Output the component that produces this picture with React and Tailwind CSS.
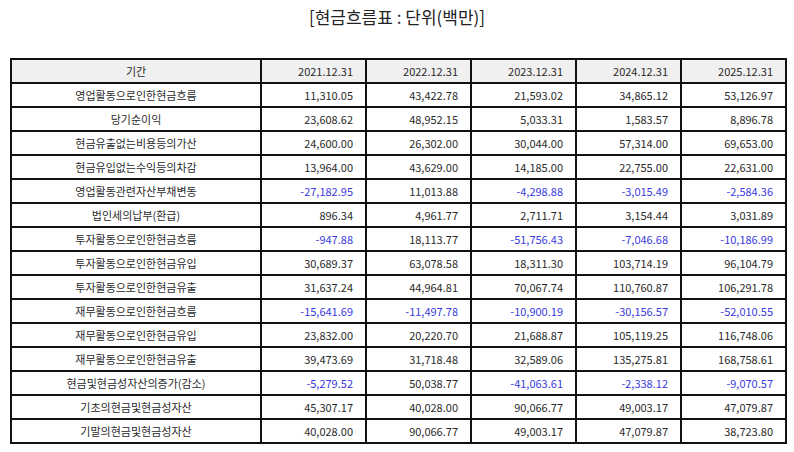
import React from "react";

const years = ["2021.12.31", "2022.12.31", "2023.12.31", "2024.12.31", "2025.12.31"];

const rows = [
  ["영업활동으로인한현금흐름", "11,310.05", "43,422.78", "21,593.02", "34,865.12", "53,126.97"],
  ["당기순이익", "23,608.62", "48,952.15", "5,033.31", "1,583.57", "8,896.78"],
  ["현금유출없는비용등의가산", "24,600.00", "26,302.00", "30,044.00", "57,314.00", "69,653.00"],
  ["현금유입없는수익등의차감", "13,964.00", "43,629.00", "14,185.00", "22,755.00", "22,631.00"],
  ["영업활동관련자산부채변동", "-27,182.95", "11,013.88", "-4,298.88", "-3,015.49", "-2,584.36"],
  ["법인세의납부(환급)", "896.34", "4,961.77", "2,711.71", "3,154.44", "3,031.89"],
  ["투자활동으로인한현금흐름", "-947.88", "18,113.77", "-51,756.43", "-7,046.68", "-10,186.99"],
  ["투자활동으로인한현금유입", "30,689.37", "63,078.58", "18,311.30", "103,714.19", "96,104.79"],
  ["투자활동으로인한현금유출", "31,637.24", "44,964.81", "70,067.74", "110,760.87", "106,291.78"],
  ["재무활동으로인한현금흐름", "-15,641.69", "-11,497.78", "-10,900.19", "-30,156.57", "-52,010.55"],
  ["재무활동으로인한현금유입", "23,832.00", "20,220.70", "21,688.87", "105,119.25", "116,748.06"],
  ["재무활동으로인한현금유출", "39,473.69", "31,718.48", "32,589.06", "135,275.81", "168,758.61"],
  ["현금및현금성자산의증가(감소)", "-5,279.52", "50,038.77", "-41,063.61", "-2,338.12", "-9,070.57"],
  ["기초의현금및현금성자산", "45,307.17", "40,028.00", "90,066.77", "49,003.17", "47,079.87"],
  ["기말의현금및현금성자산", "40,028.00", "90,066.77", "49,003.17", "47,079.87", "38,723.80"],
];

function App() {
  return (
    <div className="w-[794px] h-[452px] bg-white text-[#2a2a2a] font-['Noto_Sans_CJK_KR','Noto_Sans',sans-serif]">
      <h1 className="pt-[6px] text-center text-[17px] leading-[22px] text-[#222]">
        [현금흐름표 : 단위(백만)]
      </h1>

      <table className="mt-[30px] ml-[10px] w-[775px] table-fixed border-collapse text-[11px]">
        <colgroup>
          <col className="w-[250px]" />
          <col className="w-[105px]" />
          <col className="w-[105px]" />
          <col className="w-[105px]" />
          <col className="w-[105px]" />
          <col className="w-[105px]" />
        </colgroup>
        <thead>
          <tr className="bg-[#f0f0f0]">
            <th className="h-[24px] border-2 border-[#111] p-0 text-center font-normal">기간</th>
            {years.map((y) => (
              <th key={y} className="h-[24px] border-2 border-[#111] p-0 pr-[12px] text-right font-normal">
                {y}
              </th>
            ))}
          </tr>
        </thead>
        <tbody>
          {rows.map(([label, ...vals]) => (
            <tr key={label}>
              <td className="h-[24px] border-2 border-[#111] p-0 text-center">{label}</td>
              {vals.map((v, i) => (
                <td
                  key={i}
                  className={
                    v.startsWith("-")
                      ? "h-[24px] border-2 border-[#111] p-0 pr-[12px] text-right text-[#3a3adf]"
                      : "h-[24px] border-2 border-[#111] p-0 pr-[12px] text-right"
                  }
                >
                  {v}
                </td>
              ))}
            </tr>
          ))}
        </tbody>
      </table>
    </div>
  );
}

export default App;
